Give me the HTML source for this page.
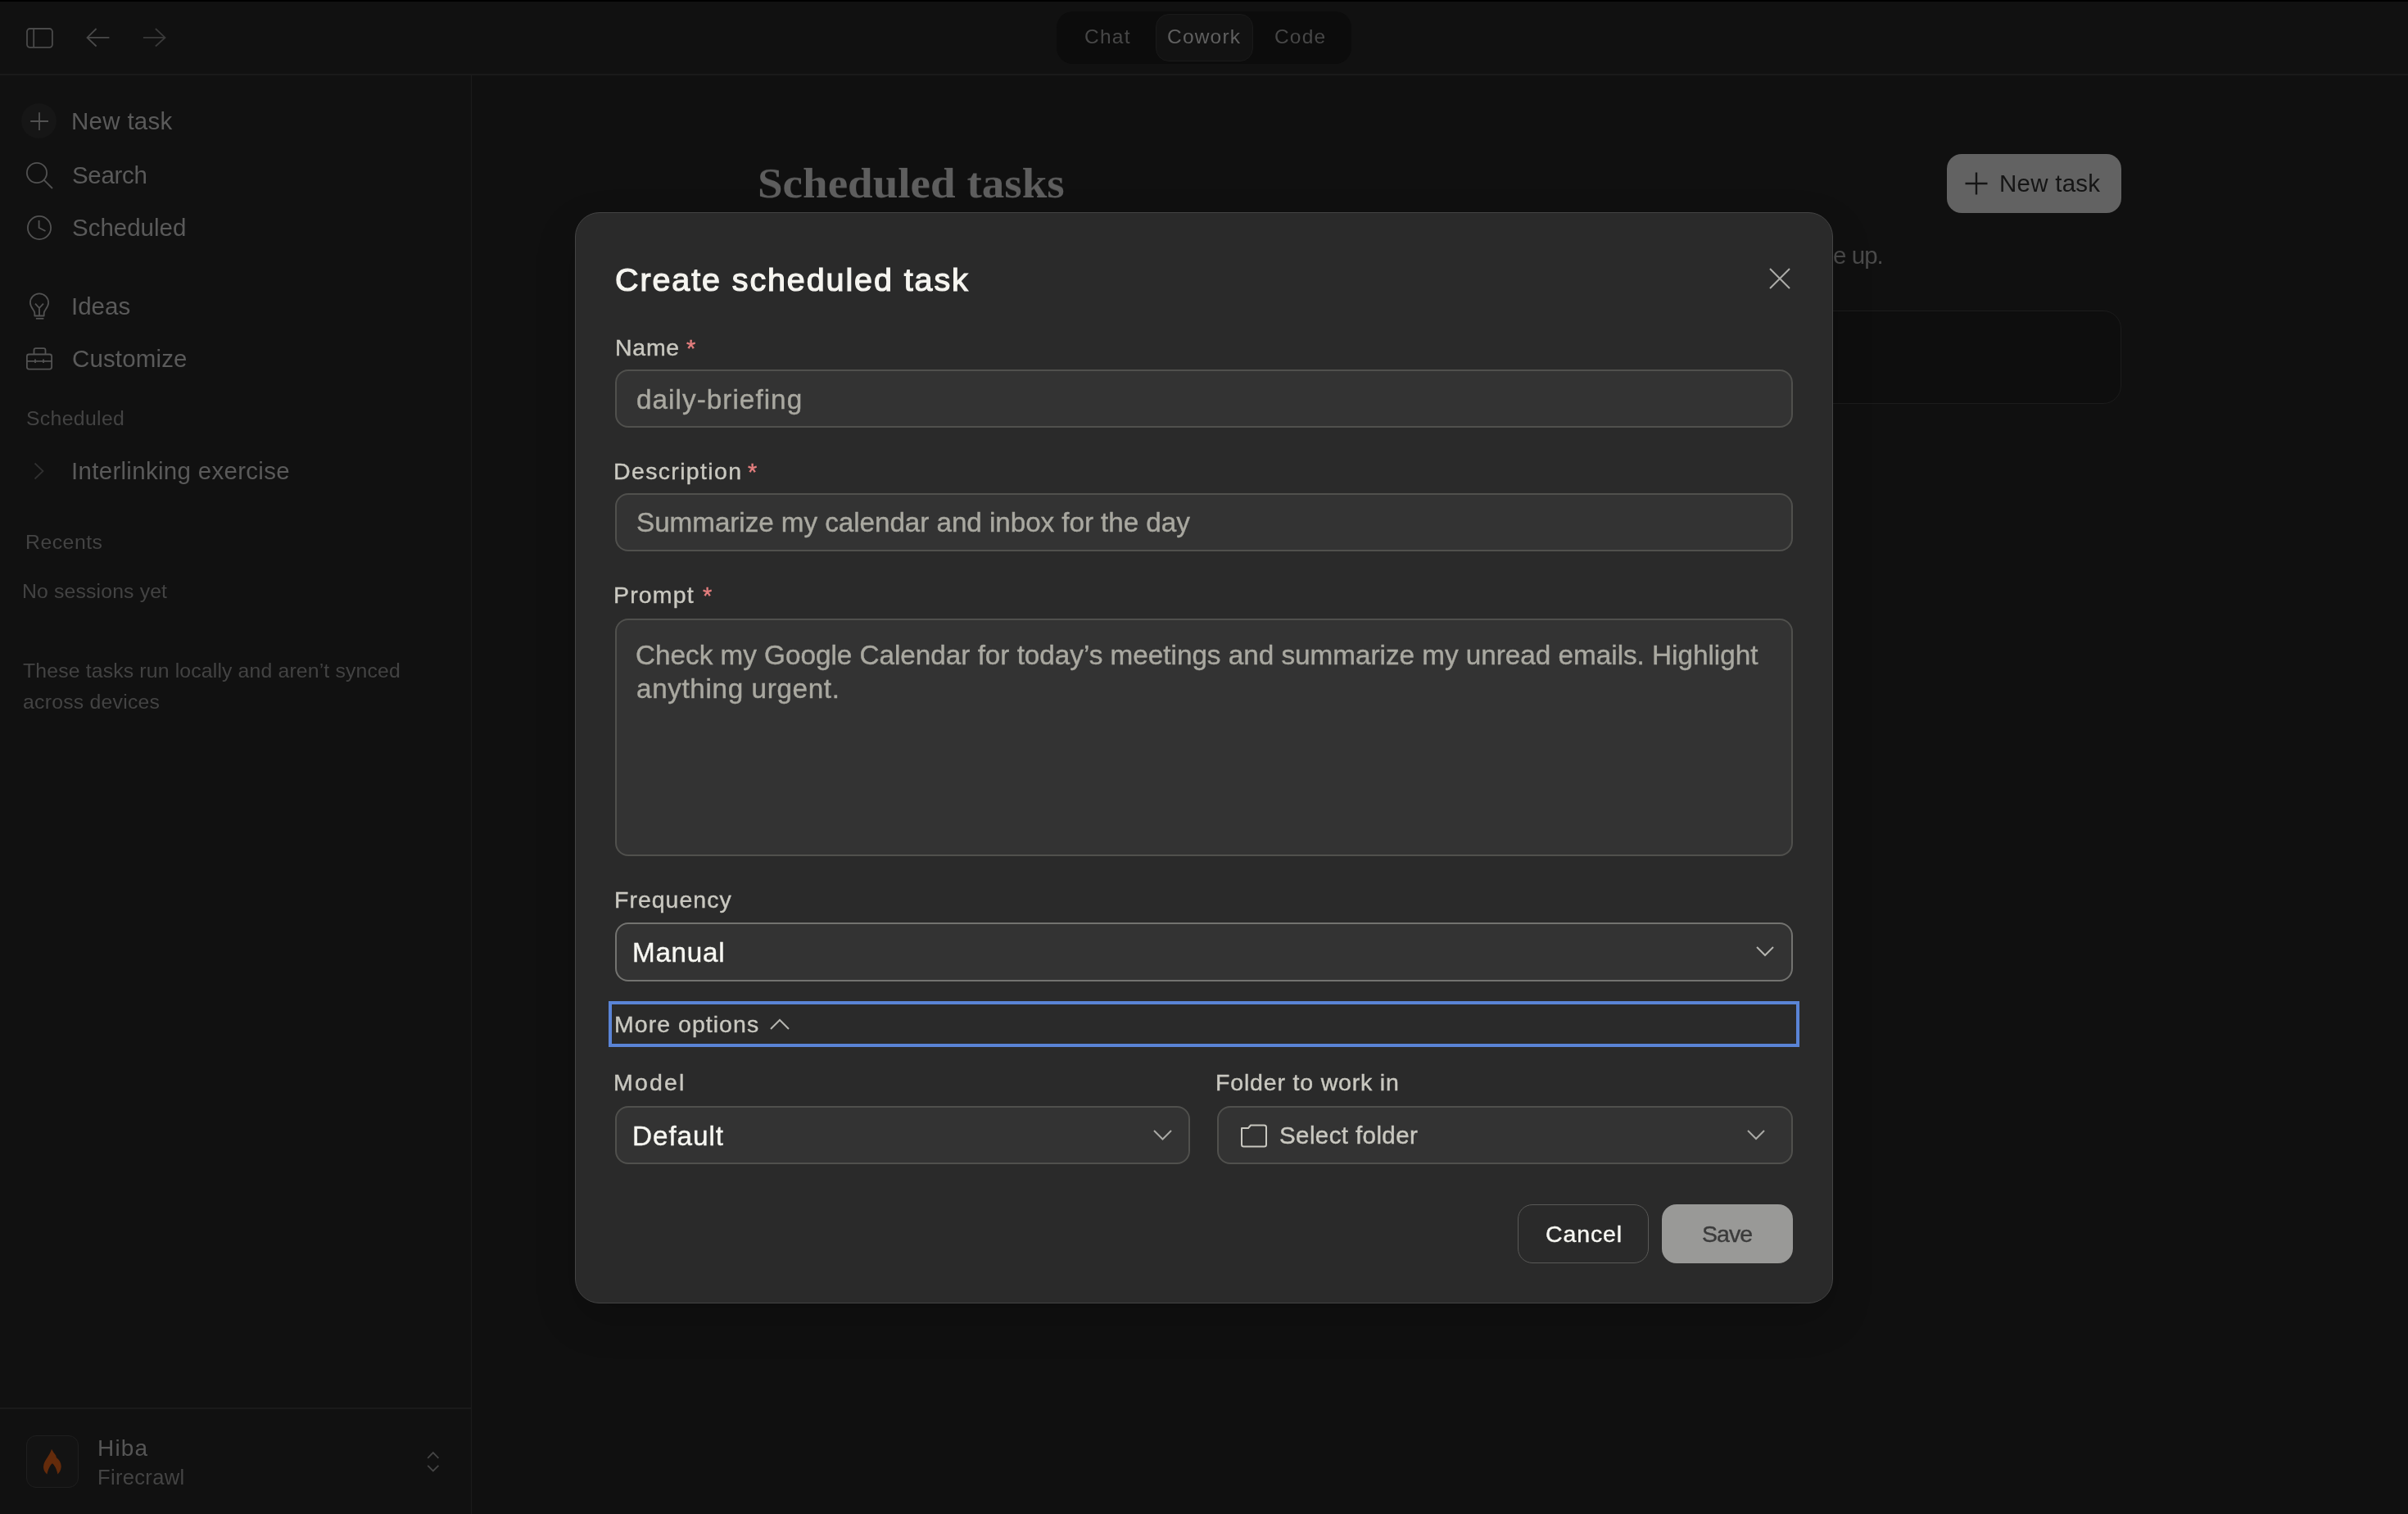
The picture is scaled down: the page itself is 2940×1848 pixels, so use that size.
<!DOCTYPE html>
<html><head><meta charset="utf-8"><style>
html,body{margin:0;padding:0;width:2940px;height:1848px;overflow:hidden;background:#111111;}
.t{position:absolute;line-height:1;white-space:nowrap;will-change:transform;}
</style></head><body>
<div style="position:absolute;left:0px;top:0px;width:2940px;height:2px;box-sizing:border-box;background:#000"></div>
<div style="position:absolute;left:0px;top:90px;width:2940px;height:2px;box-sizing:border-box;background:#1a1a1a"></div>
<svg style="position:absolute;left:30px;top:32px" width="36" height="28" viewBox="0 0 36 28" fill="none"><rect x="3" y="3" width="30.9" height="22.8" rx="3.5" stroke="#4a4a4a" stroke-width="1.8"/><line x1="11.2" y1="3" x2="11.2" y2="25.8" stroke="#4a4a4a" stroke-width="1.8"/></svg>
<svg style="position:absolute;left:104px;top:33px" width="32" height="26" viewBox="0 0 32 26" fill="none"><path d="M29.4 12.9H2.5M13.6 2L2.5 12.9L13.6 23.5" stroke="#4a4a4a" stroke-width="1.8"/></svg>
<svg style="position:absolute;left:172px;top:33px" width="32" height="26" viewBox="0 0 32 26" fill="none"><path d="M2.9 12.9H29.5M17.9 2L29.5 12.9L17.9 23.5" stroke="#3a3a3a" stroke-width="1.8"/></svg>
<div style="position:absolute;left:1290px;top:14px;width:360px;height:64px;box-sizing:border-box;background:#0c0c0c;border-radius:20px"></div>
<div style="position:absolute;left:1411px;top:17px;width:119px;height:58px;box-sizing:border-box;background:#121212;border:1px solid #1a1a1a;border-radius:16px"></div>
<div class="t" style="left:1324.38px;top:33.26px;font-size:24.50px;letter-spacing:1.273px;color:#474747;font-weight:400;font-family:'Liberation Sans', sans-serif;">Chat</div>
<div class="t" style="left:1424.78px;top:33.26px;font-size:24.50px;letter-spacing:1.187px;color:#606060;font-weight:400;font-family:'Liberation Sans', sans-serif;">Cowork</div>
<div class="t" style="left:1555.78px;top:33.26px;font-size:24.50px;letter-spacing:1.180px;color:#474747;font-weight:400;font-family:'Liberation Sans', sans-serif;">Code</div>
<div style="position:absolute;left:575px;top:92px;width:1px;height:1756px;box-sizing:border-box;background:#1b1b1b"></div>
<div style="position:absolute;left:0px;top:1718px;width:575px;height:2px;box-sizing:border-box;background:#1a1a1a"></div>
<div style="position:absolute;left:26px;top:125.5px;width:43px;height:43.0px;box-sizing:border-box;background:#161616;border-radius:50%"></div>
<svg style="position:absolute;left:36px;top:136px" width="24" height="24" viewBox="0 0 24 24" fill="none"><path d="M12 1.2V23M1.2 12H23" stroke="#525252" stroke-width="1.8"/></svg>
<div class="t" style="left:87.24px;top:133.33px;font-size:29.50px;letter-spacing:0.293px;color:#5a5a5a;font-weight:400;font-family:'Liberation Sans', sans-serif;">New task</div>
<svg style="position:absolute;left:30px;top:196px" width="36" height="36" viewBox="0 0 36 36" fill="none"><circle cx="15" cy="15" r="12.1" stroke="#525252" stroke-width="1.8"/><path d="M23.6 23.6L34 34" stroke="#525252" stroke-width="1.8"/></svg>
<div class="t" style="left:88.02px;top:199.43px;font-size:29.50px;letter-spacing:-0.327px;color:#5a5a5a;font-weight:400;font-family:'Liberation Sans', sans-serif;">Search</div>
<svg style="position:absolute;left:31px;top:261px" width="34" height="34" viewBox="0 0 34 34" fill="none"><circle cx="17" cy="17" r="14.1" stroke="#525252" stroke-width="1.8"/><path d="M16.6 8V17L24.5 21" stroke="#525252" stroke-width="1.8"/></svg>
<div class="t" style="left:87.82px;top:263.03px;font-size:29.50px;letter-spacing:-0.010px;color:#5a5a5a;font-weight:400;font-family:'Liberation Sans', sans-serif;">Scheduled</div>
<svg style="position:absolute;left:33px;top:356px" width="30" height="36" viewBox="0 0 30 36" fill="none"><path d="M9.3 29.5V26C9.3 22.5 3.9 19.5 3.9 13.5A11.1 11.1 0 0 1 26.1 13.5C26.1 19.5 20.7 22.5 20.7 26V29.5Z" stroke="#525252" stroke-width="1.8" stroke-linejoin="round"/><path d="M10 14.6L15 20L20 14.6M15 20V29M10.9 32.8H20.4" stroke="#525252" stroke-width="1.8"/></svg>
<div class="t" style="left:86.64px;top:358.83px;font-size:29.50px;letter-spacing:-0.006px;color:#5a5a5a;font-weight:400;font-family:'Liberation Sans', sans-serif;">Ideas</div>
<svg style="position:absolute;left:30px;top:422px" width="36" height="32" viewBox="0 0 36 32" fill="none"><rect x="2.9" y="10.5" width="30.2" height="18.1" rx="2.5" stroke="#525252" stroke-width="1.8"/><path d="M11.5 10.5V5.5Q11.5 3.2 13.8 3.2H23.2Q25.5 3.2 25.5 5.5V10.5M2.9 18.8H33.1M13 16.5V21M23 16.5V21" stroke="#525252" stroke-width="1.8"/></svg>
<div class="t" style="left:87.83px;top:423.23px;font-size:29.50px;letter-spacing:0.137px;color:#5a5a5a;font-weight:400;font-family:'Liberation Sans', sans-serif;">Customize</div>
<div class="t" style="left:31.91px;top:498.61px;font-size:24.80px;letter-spacing:0.335px;color:#434343;font-weight:400;font-family:'Liberation Sans', sans-serif;">Scheduled</div>
<svg style="position:absolute;left:38px;top:562px" width="20" height="26" viewBox="0 0 20 26" fill="none"><path d="M4.5 3.5L14.5 13L4.5 22.5" stroke="#303030" stroke-width="1.8"/></svg>
<div class="t" style="left:86.64px;top:559.83px;font-size:29.50px;letter-spacing:0.296px;color:#5a5a5a;font-weight:400;font-family:'Liberation Sans', sans-serif;">Interlinking exercise</div>
<div class="t" style="left:30.92px;top:650.11px;font-size:24.80px;letter-spacing:0.508px;color:#434343;font-weight:400;font-family:'Liberation Sans', sans-serif;">Recents</div>
<div class="t" style="left:26.72px;top:709.71px;font-size:24.80px;letter-spacing:0.141px;color:#434343;font-weight:400;font-family:'Liberation Sans', sans-serif;">No sessions yet</div>
<div class="t" style="left:28.20px;top:806.91px;font-size:24.80px;letter-spacing:0.147px;color:#434343;font-weight:400;font-family:'Liberation Sans', sans-serif;">These tasks run locally and aren’t synced</div>
<div class="t" style="left:27.71px;top:845.31px;font-size:24.80px;letter-spacing:0.232px;color:#434343;font-weight:400;font-family:'Liberation Sans', sans-serif;">across devices</div>
<div style="position:absolute;left:32px;top:1752px;width:64px;height:64px;box-sizing:border-box;background:#131313;border:1.2px solid #1f1f1f;border-radius:12px"></div>
<svg style="position:absolute;left:53px;top:1768px" width="23" height="33" viewBox="0 0 23 33" fill="none"><path d="M10 0.8C11.5 3.5 13.5 6.5 15.3 8.7L15.8 11C19.5 14 22 18 21.7 22.5C21.5 26.5 19.5 29.5 17.4 31.4C16.5 25.5 13.5 20 10.8 18.2C8 20.5 5.5 26 4.5 31.4C2 29.5 0 26.5 0 22.4C0 15 8 9 10 0.8Z" fill="#642b0b"/></svg>
<div class="t" style="left:118.76px;top:1753.90px;font-size:28.00px;letter-spacing:1.182px;color:#555555;font-weight:400;font-family:'Liberation Sans', sans-serif;">Hiba</div>
<div class="t" style="left:118.96px;top:1791.41px;font-size:25.50px;letter-spacing:0.338px;color:#444444;font-weight:400;font-family:'Liberation Sans', sans-serif;">Firecrawl</div>
<svg style="position:absolute;left:518px;top:1768px" width="22" height="32" viewBox="0 0 22 32" fill="none"><path d="M4.2 11.8L10.8 5L17.4 11.8M4.2 20.8L10.8 27.4L17.4 20.8" stroke="#454545" stroke-width="1.8"/></svg>
<div style="position:absolute;left:576px;top:92px;width:2364px;height:1756px;box-sizing:border-box;background:#101010"></div>
<div class="t" style="left:925.25px;top:194.89px;font-size:55.06px;letter-spacing:0.000px;color:#5e5e5e;font-weight:700;font-family:'Liberation Serif', serif;transform:scaleY(0.95);transform-origin:0 45px;">Scheduled tasks</div>
<div style="position:absolute;left:2377px;top:188px;width:213px;height:72px;box-sizing:border-box;background:#626262;border-radius:18px"></div>
<svg style="position:absolute;left:2398px;top:209px" width="30" height="30" viewBox="0 0 30 30" fill="none"><path d="M15 1.5V28.5M1.5 15H28.5" stroke="#151515" stroke-width="2.4"/></svg>
<div class="t" style="left:2440.64px;top:209.33px;font-size:29.50px;letter-spacing:0.250px;color:#151515;font-weight:400;font-family:'Liberation Sans', sans-serif;">New task</div>
<div style="position:absolute;left:928px;top:379px;width:1662px;height:114px;box-sizing:border-box;background:#0e0e0e;border:1.5px solid #1c1c1c;border-radius:22px"></div>
<div class="t" style="left:2237.62px;top:296.93px;font-size:29.50px;letter-spacing:-0.960px;color:#4a4a4a;font-weight:400;font-family:'Liberation Sans', sans-serif;">e up.</div>
<div style="position:absolute;left:702px;top:259px;width:1536px;height:1332px;box-sizing:border-box;background:#2a2a2a;border:1.5px solid #444444;border-radius:30px;box-shadow:0 20px 50px rgba(0,0,0,0.18)"></div>
<div class="t" style="left:751.32px;top:321.86px;font-size:39.50px;letter-spacing:1.887px;color:#f6f5f0;font-weight:400;font-family:'Liberation Sans', sans-serif;-webkit-text-stroke:1.2px #f6f5f0;">Create scheduled task</div>
<svg style="position:absolute;left:2159px;top:326px" width="28" height="28" viewBox="0 0 28 28" fill="none"><path d="M2 2L26 26M26 2L2 26" stroke="#acaca8" stroke-width="2"/></svg>
<div class="t" style="left:750.52px;top:409.77px;font-size:28.50px;letter-spacing:0.729px;color:#c9c8c0;font-weight:400;font-family:'Liberation Sans', sans-serif;-webkit-text-stroke:0.4px #c9c8c0;">Name</div>
<div class="t" style="left:837.51px;top:410.95px;font-size:29.00px;letter-spacing:0.000px;color:#e57f7f;font-weight:400;font-family:'Liberation Sans', sans-serif;-webkit-text-stroke:0.4px #e57f7f;">*</div>
<div style="position:absolute;left:751px;top:451px;width:1438px;height:71px;box-sizing:border-box;background:#333333;border:2px solid #50504d;border-radius:16px"></div>
<div class="t" style="left:776.87px;top:471.21px;font-size:33.30px;letter-spacing:1.032px;color:#a9a8a0;font-weight:400;font-family:'Liberation Sans', sans-serif;-webkit-text-stroke:0.4px #a9a8a0;">daily-briefing</div>
<div class="t" style="left:749.32px;top:560.87px;font-size:28.50px;letter-spacing:1.352px;color:#c9c8c0;font-weight:400;font-family:'Liberation Sans', sans-serif;-webkit-text-stroke:0.4px #c9c8c0;">Description</div>
<div class="t" style="left:913.11px;top:561.95px;font-size:29.00px;letter-spacing:0.000px;color:#e57f7f;font-weight:400;font-family:'Liberation Sans', sans-serif;-webkit-text-stroke:0.4px #e57f7f;">*</div>
<div style="position:absolute;left:751px;top:602px;width:1438px;height:71px;box-sizing:border-box;background:#333333;border:2px solid #50504d;border-radius:16px"></div>
<div class="t" style="left:776.67px;top:621.41px;font-size:33.30px;letter-spacing:-0.080px;color:#a9a8a0;font-weight:400;font-family:'Liberation Sans', sans-serif;-webkit-text-stroke:0.4px #a9a8a0;">Summarize my calendar and inbox for the day</div>
<div class="t" style="left:749.32px;top:711.87px;font-size:28.50px;letter-spacing:1.152px;color:#c9c8c0;font-weight:400;font-family:'Liberation Sans', sans-serif;-webkit-text-stroke:0.4px #c9c8c0;">Prompt</div>
<div class="t" style="left:857.71px;top:712.95px;font-size:29.00px;letter-spacing:0.000px;color:#e57f7f;font-weight:400;font-family:'Liberation Sans', sans-serif;-webkit-text-stroke:0.4px #e57f7f;">*</div>
<div style="position:absolute;left:751px;top:755px;width:1438px;height:290px;box-sizing:border-box;background:#333333;border:2px solid #50504d;border-radius:16px"></div>
<div class="t" style="left:776.34px;top:782.81px;font-size:33.30px;letter-spacing:-0.025px;color:#a9a8a0;font-weight:400;font-family:'Liberation Sans', sans-serif;-webkit-text-stroke:0.4px #a9a8a0;">Check my Google Calendar for today’s meetings and summarize my unread emails. Highlight</div>
<div class="t" style="left:776.67px;top:823.81px;font-size:33.30px;letter-spacing:0.609px;color:#a9a8a0;font-weight:400;font-family:'Liberation Sans', sans-serif;-webkit-text-stroke:0.4px #a9a8a0;">anything urgent.</div>
<div class="t" style="left:750.02px;top:1084.37px;font-size:28.50px;letter-spacing:1.004px;color:#c9c8c0;font-weight:400;font-family:'Liberation Sans', sans-serif;-webkit-text-stroke:0.4px #c9c8c0;">Frequency</div>
<div style="position:absolute;left:751px;top:1126px;width:1438px;height:72px;box-sizing:border-box;background:#333333;border:2px solid #737370;border-radius:16px"></div>
<div class="t" style="left:772.14px;top:1145.81px;font-size:33.30px;letter-spacing:0.683px;color:#f7f7f2;font-weight:400;font-family:'Liberation Sans', sans-serif;-webkit-text-stroke:0.4px #f7f7f2;">Manual</div>
<svg style="position:absolute;left:2143px;top:1154px" width="24" height="16" viewBox="0 0 24 16" fill="none"><path d="M2 2L12 12L22 2" stroke="#b5b5b0" stroke-width="2"/></svg>
<div style="position:absolute;left:743px;top:1222px;width:1454px;height:56px;box-sizing:border-box;border:4px solid #5a84d6"></div>
<div class="t" style="left:749.72px;top:1235.87px;font-size:28.50px;letter-spacing:1.035px;color:#c9c8c0;font-weight:400;font-family:'Liberation Sans', sans-serif;-webkit-text-stroke:0.4px #c9c8c0;">More options</div>
<svg style="position:absolute;left:939px;top:1241px" width="26" height="18" viewBox="0 0 26 18" fill="none"><path d="M2 15L13 4L24 15" stroke="#b5b5b0" stroke-width="2"/></svg>
<div class="t" style="left:749.32px;top:1307.37px;font-size:28.50px;letter-spacing:2.207px;color:#c9c8c0;font-weight:400;font-family:'Liberation Sans', sans-serif;-webkit-text-stroke:0.4px #c9c8c0;">Model</div>
<div class="t" style="left:1484.32px;top:1307.47px;font-size:28.50px;letter-spacing:0.826px;color:#c9c8c0;font-weight:400;font-family:'Liberation Sans', sans-serif;-webkit-text-stroke:0.4px #c9c8c0;">Folder to work in</div>
<div style="position:absolute;left:751px;top:1350px;width:702px;height:71px;box-sizing:border-box;background:#333333;border:2px solid #50504d;border-radius:16px"></div>
<div class="t" style="left:772.34px;top:1369.81px;font-size:33.30px;letter-spacing:0.930px;color:#f7f7f2;font-weight:400;font-family:'Liberation Sans', sans-serif;-webkit-text-stroke:0.4px #f7f7f2;">Default</div>
<svg style="position:absolute;left:1407px;top:1378px" width="26" height="16" viewBox="0 0 26 16" fill="none"><path d="M2 2L12.5 12.5L23 2" stroke="#a9a9a5" stroke-width="2"/></svg>
<div style="position:absolute;left:1486px;top:1350px;width:703px;height:71px;box-sizing:border-box;background:#333333;border:2px solid #50504d;border-radius:16px"></div>
<svg style="position:absolute;left:1513px;top:1370px" width="36" height="32" viewBox="0 0 36 32" fill="none"><path d="M3 7V27C3 28.5 4 29.5 5.5 29.5H30.5C32 29.5 33 28.5 33 27V6C33 4.5 32 3.5 30.5 3.5H14L11 7Z" stroke="#c9c8c0" stroke-width="2" stroke-linejoin="round"/></svg>
<div class="t" style="left:1562.22px;top:1371.03px;font-size:29.50px;letter-spacing:0.399px;color:#c9c8c0;font-weight:400;font-family:'Liberation Sans', sans-serif;-webkit-text-stroke:0.4px #c9c8c0;">Select folder</div>
<svg style="position:absolute;left:2132px;top:1378px" width="24" height="16" viewBox="0 0 24 16" fill="none"><path d="M2 2L12 12L22 2" stroke="#a9a9a5" stroke-width="2"/></svg>
<div style="position:absolute;left:1853px;top:1470px;width:160px;height:72px;box-sizing:border-box;border:1.5px solid #595957;border-radius:18px"></div>
<div class="t" style="left:1886.58px;top:1492.17px;font-size:28.50px;letter-spacing:0.896px;color:#f7f7f2;font-weight:400;font-family:'Liberation Sans', sans-serif;-webkit-text-stroke:0.4px #f7f7f2;">Cancel</div>
<div style="position:absolute;left:2029px;top:1470px;width:160px;height:72px;box-sizing:border-box;background:#999997;border-radius:18px"></div>
<div class="t" style="left:2077.86px;top:1492.17px;font-size:28.50px;letter-spacing:-0.930px;color:#3b3b3b;font-weight:400;font-family:'Liberation Sans', sans-serif;-webkit-text-stroke:0.4px #3b3b3b;">Save</div>
</body></html>
